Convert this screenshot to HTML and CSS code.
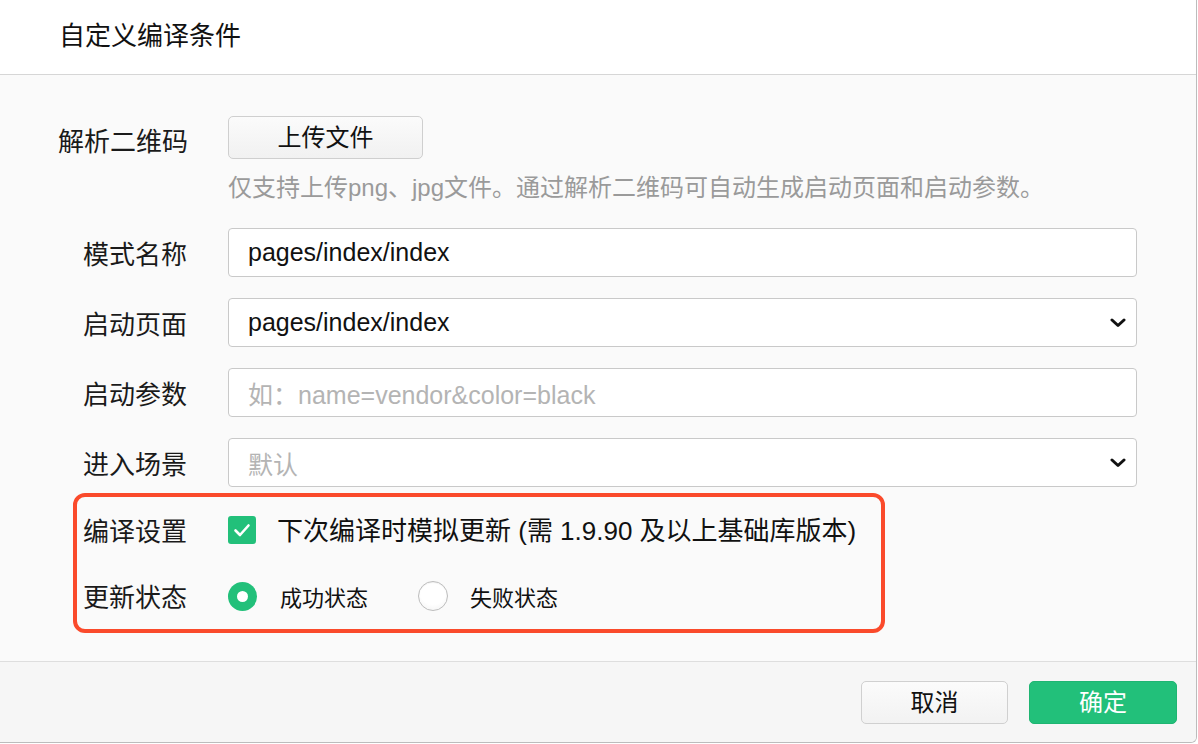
FILE: index.html
```html
<!DOCTYPE html>
<html lang="zh-CN">
<head>
<meta charset="utf-8">
<title>自定义编译条件</title>
<link rel="stylesheet" href="styles.css">
</head>
<body>
<div class="dialog">
  <header class="dialog-header">
    <h1 class="dialog-title">自定义编译条件</h1>
  </header>
  <main class="dialog-body">
    <div class="form">
      <div class="row row-upload">
        <label class="label">解析二维码</label>
        <div class="control">
          <button class="btn btn-upload" type="button">上传文件</button>
        </div>
      </div>
      <div class="row row-hint">
        <span class="label"></span>
        <p class="hint">仅支持上传png、jpg文件。通过解析二维码可自动生成启动页面和启动参数。</p>
      </div>
      <div class="row row-input">
        <label class="label">模式名称</label>
        <div class="field"><span class="value">pages/index/index</span></div>
      </div>
      <div class="row row-input">
        <label class="label">启动页面</label>
        <div class="field select"><span class="value">pages/index/index</span>
          <svg class="chevron" width="16" height="10" viewBox="0 0 16 10"><path d="M2 2 L8 7.5 L14 2" fill="none" stroke="#111" stroke-width="3" stroke-linecap="round" stroke-linejoin="round"/></svg>
        </div>
      </div>
      <div class="row row-input">
        <label class="label">启动参数</label>
        <div class="field"><span class="placeholder">如：name=vendor&amp;color=black</span></div>
      </div>
      <div class="row row-input">
        <label class="label">进入场景</label>
        <div class="field select"><span class="placeholder">默认</span>
          <svg class="chevron" width="16" height="10" viewBox="0 0 16 10"><path d="M2 2 L8 7.5 L14 2" fill="none" stroke="#111" stroke-width="3" stroke-linecap="round" stroke-linejoin="round"/></svg>
        </div>
      </div>
      <div class="highlight">
        <div class="row row-check">
          <label class="label">编译设置</label>
          <div class="control check-control">
            <span class="checkbox">
              <svg width="28" height="28" viewBox="0 0 28 28"><path d="M7.5 14.5 L12 19 L20.5 9.5" fill="none" stroke="#fff" stroke-width="2.6" stroke-linecap="round" stroke-linejoin="round"/></svg>
            </span>
            <span class="check-text">下次编译时模拟更新 (需 1.9.90 及以上基础库版本)</span>
          </div>
        </div>
        <div class="row row-radio">
          <label class="label">更新状态</label>
          <div class="control radio-control">
            <span class="radio-item"><span class="radio checked"></span><span class="radio-text">成功状态</span></span>
            <span class="radio-item"><span class="radio"></span><span class="radio-text">失败状态</span></span>
          </div>
        </div>
      </div>
    </div>
  </main>
  <footer class="dialog-footer">
    <button class="btn btn-cancel" type="button">取消</button>
    <button class="btn btn-primary" type="button">确定</button>
  </footer>
</div>
</body>
</html>
```

FILE: styles.css
```css
html, body {
  margin: 0;
  padding: 0;
  background: #ffffff;
}

body {
  font-family: "Liberation Sans", "Noto Sans CJK SC", sans-serif;
  color: #1a1a1a;
}

.dialog {
  width: 1196px;
  height: 742px;
  border-right: 1px solid #bcbcbc;
  border-bottom: 1px solid #bcbcbc;
  border-bottom-right-radius: 6px;
  overflow: hidden;
  display: flex;
  flex-direction: column;
  background: #fafafa;
}

.dialog-header {
  height: 74px;
  flex: 0 0 auto;
  background: #ffffff;
  border-bottom: 1px solid #d6d6d6;
  display: flex;
  align-items: center;
  padding-left: 59px;
}

.dialog-title {
  margin: 0;
  font-size: 26px;
  font-weight: normal;
  color: #111;
  line-height: 1;
  padding-bottom: 2px;
}

.dialog-body {
  flex: 1 1 auto;
  padding: 41px 0 0 58px;
}

.form {
  width: 1079px;
  display: flex;
  flex-direction: column;
}

.row {
  display: grid;
  grid-template-columns: 129px 909px;
  column-gap: 41px;
  align-items: center;
}

.label {
  text-align: right;
  font-size: 26px;
  color: #1a1a1a;
  line-height: 1;
  padding-top: 4px;
  white-space: nowrap;
}

.row-upload {
  height: 43px;
}

.row-upload .label {
  padding-top: 8px;
}

.row-hint {
  margin-top: 14px;
  height: 30px;
}

.hint {
  margin: 0;
  font-size: 24px;
  color: #9a9a9a;
  line-height: 30px;
  white-space: nowrap;
}

.row-input {
  height: 49px;
  margin-top: 21px;
}

.row-hint + .row-input {
  margin-top: 25px;
}

.field {
  height: 49px;
  box-sizing: border-box;
  border: 1px solid #c9c9c9;
  border-radius: 4px;
  background: #ffffff;
  display: flex;
  align-items: center;
  justify-content: space-between;
  padding: 0 10px 0 19px;
}

.value {
  font-size: 25px;
  color: #111;
}

.placeholder {
  font-size: 25px;
  color: #b4b4b4;
}

.chevron {
  display: block;
}

.btn {
  font-family: "Liberation Sans", "Noto Sans CJK SC", sans-serif;
  font-size: 24px;
  height: 43px;
  box-sizing: border-box;
  border-radius: 5px;
  cursor: pointer;
  padding: 0;
  line-height: 1;
}

.btn-upload {
  width: 195px;
  background: linear-gradient(#fbfbfb, #f1f1f1);
  border: 1px solid #cfcfcf;
  color: #111;
}

.highlight {
  position: relative;
  margin-top: 23px;
}

.highlight::before {
  content: "";
  position: absolute;
  left: 15px;
  top: -17px;
  right: 252px;
  bottom: -17px;
  border: 4px solid #fa4a2b;
  border-radius: 12px;
  pointer-events: none;
}

.row-check {
  height: 40px;
}

.row-radio {
  height: 40px;
  margin-top: 26px;
}

.check-control {
  display: flex;
  align-items: center;
  gap: 21px;
}

.checkbox {
  width: 28px;
  height: 28px;
  border-radius: 3px;
  background: #22c07a;
  display: flex;
  align-items: center;
  justify-content: center;
  flex: 0 0 auto;
}

.checkbox svg {
  display: block;
}

.check-text {
  font-size: 26px;
  color: #111;
  white-space: nowrap;
  margin-top: -3px;
}

.radio-control {
  display: flex;
  align-items: center;
  gap: 50px;
}

.radio-item {
  display: flex;
  align-items: center;
  gap: 22px;
}

.radio {
  width: 30px;
  height: 30px;
  box-sizing: border-box;
  border-radius: 50%;
  border: 1px solid #bdbdbd;
  background: radial-gradient(circle at 50% 35%, #ffffff 55%, #f0f0f0 100%);
  box-shadow: inset 0 1px 1px rgba(0,0,0,0.06);
  position: relative;
}

.radio.checked {
  border: none;
  background: #22c07a;
  box-shadow: none;
  width: 29px;
  height: 29px;
  margin-right: 1px;
}

.radio.checked::after {
  content: "";
  position: absolute;
  left: 50%;
  top: 50%;
  width: 11px;
  height: 11px;
  margin: -5.5px 0 0 -5.5px;
  border-radius: 50%;
  background: #ffffff;
}

.radio-text {
  font-size: 22px;
  color: #111;
  white-space: nowrap;
}

.dialog-footer {
  flex: 0 0 auto;
  height: 81px;
  box-sizing: border-box;
  border-top: 1px solid #dedede;
  background: #f6f6f6;
  display: flex;
  justify-content: flex-end;
  align-items: flex-start;
  gap: 21px;
  padding: 19px 19px 0 0;
}

.btn-cancel {
  width: 147px;
  background: linear-gradient(#fbfbfb, #f2f2f2);
  border: 1px solid #d0d0d0;
  color: #111;
}

.btn-primary {
  width: 148px;
  background: #22c07a;
  border: 1px solid #1fb572;
  color: #ffffff;
}
```
